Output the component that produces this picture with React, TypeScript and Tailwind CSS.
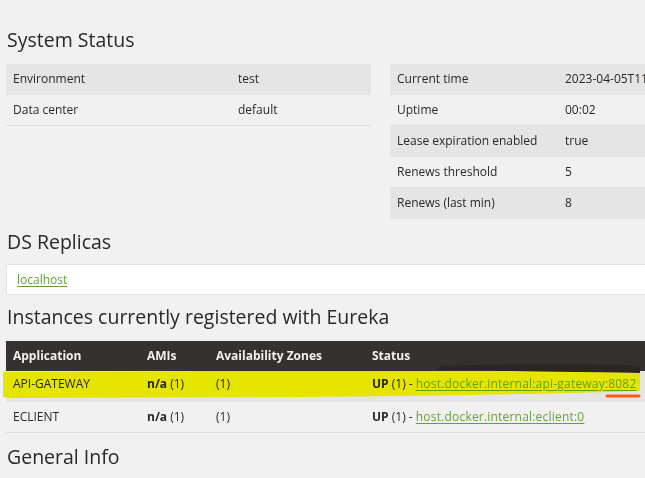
import React from "react"

const leftRows = [
  ["Environment", "test"],
  ["Data center", "default"],
]

const rightRows = [
  ["Current time", "2023-04-05T11:02:37 +0000"],
  ["Uptime", "00:02"],
  ["Lease expiration enabled", "true"],
  ["Renews threshold", "5"],
  ["Renews (last min)", "8"],
]

function InfoTable({ rows, keyWidth }: { rows: string[][]; keyWidth: string }) {
  return (
    <table className="w-full border-collapse text-[12px] text-[#2b2724]">
      <tbody>
        {rows.map(([k, v], i) => (
          <tr key={k} className={i % 2 === 0 ? "bg-[#e5e5e5]" : "border-b border-[#dddfe3]"}>
            <td className={`${keyWidth} h-[31px] pl-[7px] whitespace-nowrap`}>{k}</td>
            <td className="h-[31px] pl-[7px] whitespace-nowrap">{v}</td>
          </tr>
        ))}
      </tbody>
    </table>
  )
}

function Heading({ children }: { children: React.ReactNode }) {
  return <h2 className="text-[19.5px] leading-none text-[#2b2724] whitespace-nowrap">{children}</h2>
}

export default function App() {
  return (
    <div className="w-full h-screen overflow-hidden bg-[#f1f1f1] font-['Open_Sans',sans-serif]">
      <div className="w-[980px] pl-[6px]">
        <div className="pt-[30px] pl-px">
          <Heading>System Status</Heading>
        </div>

        <div className="mt-[14px] flex gap-[19px] items-start">
          <div className="w-[365px]">
            <InfoTable rows={leftRows} keyWidth="w-[225px]" />
          </div>
          <div className="w-[420px]">
            <InfoTable rows={rightRows} keyWidth="w-[168px]" />
          </div>
        </div>

        <div className="mt-[13px] pl-px">
          <Heading>DS Replicas</Heading>
        </div>
        <div className="mt-[13px] h-[31px] bg-white border border-[#e3e3e3] rounded-[2px] flex items-center pl-[10px] text-[12px]">
          <a href="#" className="text-[#62a235] underline underline-offset-2">localhost</a>
        </div>

        <div className="mt-[12px] pl-px">
          <Heading>Instances currently registered with Eureka</Heading>
        </div>

        <div className="relative mt-[14px]">
          <table className="w-full border-collapse text-[12px] text-[#2b2724]">
            <thead>
              <tr className="bg-[#353130] text-[#f4f1ec]">
                <th className="w-[134px] h-[30px] pl-[7px] text-left font-bold">Application</th>
                <th className="w-[69px] text-left font-bold pl-[7px]">AMIs</th>
                <th className="w-[156px] text-left font-bold pl-[7px]">Availability Zones</th>
                <th className="text-left font-bold pl-[7px]">Status</th>
              </tr>
            </thead>
            <tbody>
              <tr className="bg-[#e5e5e5]">
                <td className="h-[31px] pl-[7px] pb-[5px]">API-GATEWAY</td>
                <td className="pl-[7px] pb-[5px]"><b>n/a</b> (1)</td>
                <td className="pl-[7px] pb-[5px]">(1)</td>
                <td className="pl-[7px] pb-[5px] whitespace-nowrap">
                  <b>UP</b> (1) - <a href="#" className="text-[#62a235] underline underline-offset-2 tracking-[0.2px]">host.docker.internal:api-gateway:8082</a>
                </td>
              </tr>
              <tr className="border-b border-[#dddfe3]">
                <td className="h-[31px] pl-[7px]">ECLIENT</td>
                <td className="pl-[7px]"><b>n/a</b> (1)</td>
                <td className="pl-[7px]">(1)</td>
                <td className="pl-[7px] whitespace-nowrap">
                  <b>UP</b> (1) - <a href="#" className="text-[#62a235] underline underline-offset-2 tracking-[0.2px]">host.docker.internal:eclient:0</a>
                </td>
              </tr>
            </tbody>
          </table>

          {/* marker highlight drawn over the screenshot */}
          <svg className="absolute left-[-6px] top-[20px] pointer-events-none mix-blend-darken" width="645" height="40" viewBox="0 0 645 40">
            <path d="M440 5 C490 3 570 3 628 4 L640 6 L640 12 L436 10 Z" fill="#2b2622" />
            <path d="M3 11 L200 10 L430 10 C470 9 570 11 640 12 L640 30 C520 34 400 35 300 36 L10 37 L3 36 Z" fill="#e6e600" />
          </svg>
          <svg className="absolute left-[-6px] top-[20px] pointer-events-none" width="645" height="40" viewBox="0 0 645 40">
            <path d="M607 35 L639 35" stroke="#ff5a14" strokeWidth="3" strokeLinecap="round" />
          </svg>
        </div>

        <div className="mt-[14px] pl-px">
          <Heading>General Info</Heading>
        </div>
      </div>
    </div>
  )
}
